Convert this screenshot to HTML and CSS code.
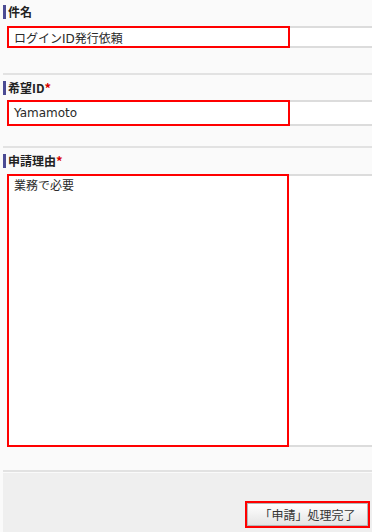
FILE: index.html
```html
<!DOCTYPE html>
<html lang="ja">
<head>
<meta charset="utf-8">
<link rel="stylesheet" href="styles.css">
</head>
<body>
<div class="page">
  <div class="label l1">件名</div>
  <div class="frame f1">
    <div class="hl">ログインID発行依頼</div>
    <div class="rest"></div>
  </div>
  <div class="sep s1"></div>

  <div class="label l2">希望ID<span class="req">*</span></div>
  <div class="frame f2">
    <div class="hl">Yamamoto</div>
    <div class="rest"></div>
  </div>
  <div class="sep s2"></div>

  <div class="label l3">申請理由<span class="req">*</span></div>
  <div class="frame f3">
    <div class="hl area">業務で必要</div>
    <div class="rest"></div>
  </div>
  <div class="sep s3"></div>

  <div class="footer">
    <div class="btn-hl"><div class="btn">「申請」処理完了</div></div>
  </div>
</div>
</body>
</html>
```

FILE: styles.css
```css
html, body {
  margin: 0;
  padding: 0;
}
body {
  background: #fafafa;
  font-family: "DejaVu Sans", "Noto Sans CJK JP", sans-serif;
  font-size: 12px;
  color: #333;
  width: 372px;
  height: 532px;
  overflow: hidden;
}
.page {
  display: flex;
  flex-direction: column;
  height: 532px;
}
.label {
  margin-left: 3px;
  border-left: 3px solid #4b4b94;
  padding-left: 2px;
  height: 14px;
  line-height: 14px;
  font-family: "Noto Sans CJK JP", sans-serif;
  font-weight: bold;
  font-size: 12px;
  color: #222;
}
.req {
  color: #d80000;
  font-family: "Noto Sans CJK JP", sans-serif;
  font-weight: bold;
  font-size: 13px;
}
.l1 { margin-top: 5px; }
.l2 { margin-top: 6px; }
.l3 { margin-top: 6px; }

.frame {
  display: flex;
  margin-left: 7px;
  flex: none;
}
.f1 { margin-top: 7px; height: 22px; }
.f2 { margin-top: 5px; height: 26px; }
.f3 { margin-top: 6px; height: 273px; }

.hl {
  box-sizing: border-box;
  width: 283px;
  border: 2px solid #ff0000;
  background: #fff;
  padding-left: 5px;
  display: flex;
  align-items: center;
  font-family: "DejaVu Sans", "Noto Sans CJK JP", sans-serif;
  font-size: 12px;
  color: #2a2a2a;
}
.hl.area {
  width: 282px;
  align-items: flex-start;
  padding-top: 2px;
  line-height: 16px;
}
.rest {
  flex: 1;
  background: #fff;
  border-top: 2px solid #dcdcdc;
  border-bottom: 2px solid #dcdcdc;
}

.sep {
  margin-left: 3px;
  height: 2px;
  background: #e2e2e2;
  flex: none;
}
.s1 { margin-top: 25px; }
.s2 { margin-top: 20px; }
.s3 { margin-top: 23px; }

.footer {
  margin-top: 1px;
  margin-left: 3px;
  flex: 1;
  background: #efefef;
  display: flex;
  justify-content: flex-end;
  align-items: flex-start;
  padding-top: 28px;
  padding-right: 2px;
}
.btn-hl {
  box-sizing: border-box;
  width: 125px;
  height: 27px;
  border: 2px solid #ff0000;
  display: flex;
}
.btn {
  flex: 1;
  border: 1px solid #b5b5b5;
  background: linear-gradient(#ffffff, #e4e4e4);
  display: flex;
  align-items: center;
  justify-content: center;
  font-family: "Noto Sans CJK JP", sans-serif;
  font-size: 12px;
  color: #333;
}
```
